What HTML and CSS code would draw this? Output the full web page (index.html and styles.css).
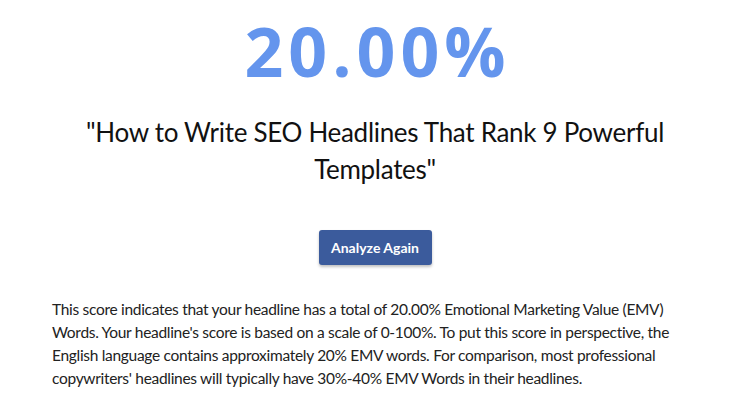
FILE: index.html
```html
<!DOCTYPE html>
<html lang="en">
<head>
<meta charset="utf-8">
<title>Headline Analyzer Result</title>
<link rel="stylesheet" href="styles.css">
</head>
<body>
<main class="result">
  <div class="score">20.00%</div>
  <h1 class="headline">"How to Write SEO Headlines That Rank 9 Powerful Templates"</h1>
  <div class="actions">
    <button class="btn" type="button">Analyze Again</button>
  </div>
  <p class="summary">This score indicates that your headline has a total of 20.00% Emotional Marketing Value (EMV) Words. Your headline's score is based on a scale of 0-100%. To put this score in perspective, the English language contains approximately 20% EMV words. For comparison, most professional copywriters' headlines will typically have 30%-40% EMV Words in their headlines.</p>
</main>
</body>
</html>
```
FILE: styles.css
```css
html, body {
  margin: 0;
  padding: 0;
  background: #ffffff;
}
body {
  width: 750px;
  height: 403px;
  overflow: hidden;
  font-family: "Lato", "Open Sans", sans-serif;
  color: #222;
}
.result {
  display: flex;
  flex-direction: column;
  align-items: center;
  padding: 0 50px;
}
.score {
  font-family: "Open Sans", sans-serif;
  font-weight: 700;
  font-size: 68px;
  line-height: 1;
  color: #6495ed;
  margin-top: 17px;
  letter-spacing: 5px;
  padding-left: 5px;
}
.headline {
  margin: 29px 0 0 0;
  font-weight: 400;
  font-size: 26px;
  letter-spacing: -0.3px;
  line-height: 37px;
  text-align: center;
  color: #111;
  max-width: 620px;
}
.actions {
  margin-top: 42px;
}
.btn {
  font-family: "Lato", sans-serif;
  font-weight: 700;
  font-size: 14px;
  color: #fff;
  background: #3b5b9c;
  border: none;
  border-radius: 3px;
  width: 113px;
  height: 35px;
  box-shadow: 0 2px 3px rgba(0,0,0,0.25);
  cursor: pointer;
}
.summary {
  margin: 33px 0 0 0;
  padding-left: 2px;
  font-size: 15.5px;
  letter-spacing: -0.3px;
  line-height: 23px;
  color: #222;
  align-self: stretch;
}
```
